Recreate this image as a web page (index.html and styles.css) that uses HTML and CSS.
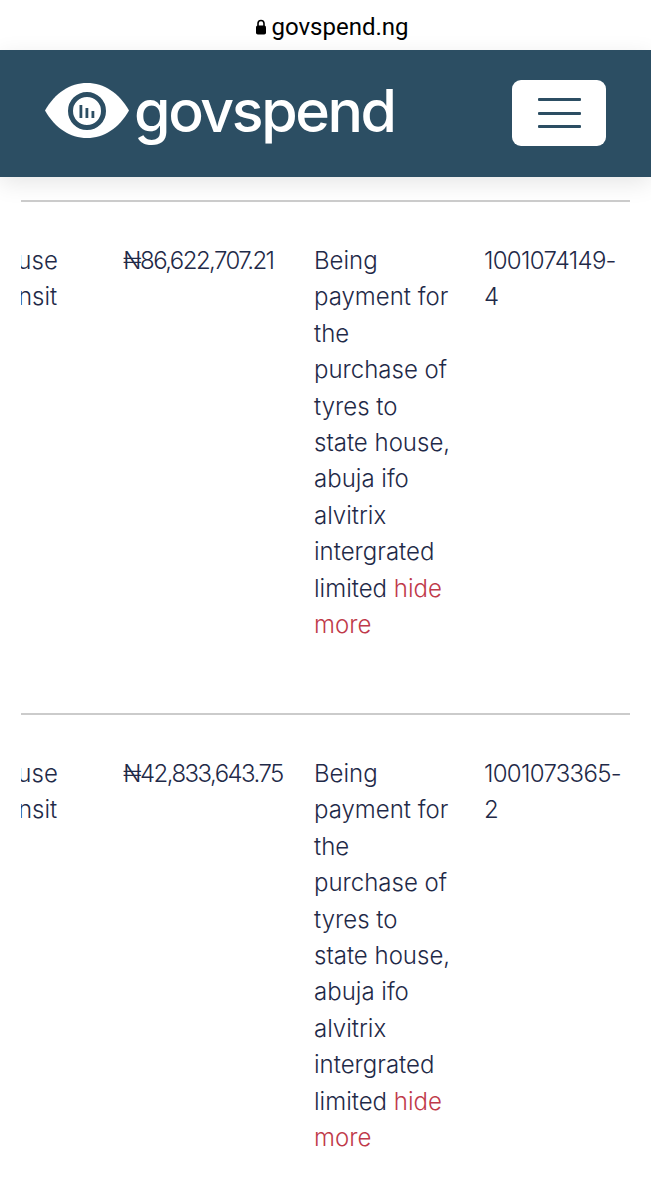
FILE: index.html
```html
<!DOCTYPE html>
<html>
    <head>
        <title>govspend.ng</title>
        <link rel="stylesheet" href="styles.css">
    </head>
    <body>
        <div class='addressBar'>
            <svg class='lock' width='12' height='16' viewBox='0 0 12 16'>
                <path d='M3 7V4.5a3 3 0 0 1 6 0V7' fill='none' stroke='#000' stroke-width='1.6'/>
                <rect x='1' y='6.5' width='10' height='9' rx='1.8' fill='#000'/>
            </svg>
            <span>govspend.ng</span>
        </div>
        <div class='topBar'>
            <div class='logo'>
                <svg class='eye' width='84' height='55' viewBox='0 0 84 55'>
                    <path d='M0 27.5C10 10 25 0 42 0s32 10 42 27.5C74 45 59 55 42 55S10 45 0 27.5z' fill='#fff'/>
                    <circle cx='42' cy='28' r='16.500' fill='none' stroke='#2c4e63' stroke-width='5'/>
                    <rect x='34.500' y='22' width='2.800' height='13' fill='#2c4e63'/>
                    <rect x='40.500' y='25' width='2.800' height='10' fill='#2c4e63'/>
                    <rect x='46.500' y='28' width='2.800' height='7' fill='#2c4e63'/>
                </svg>
                <span class='logoText'>govspend</span>
            </div>
            <div class='menuBtn'>
                <span></span>
                <span></span>
                <span></span>
            </div>
        </div>
        <div class='tableWrap'>
            <div class='row'>
                <div class='cell place'><div class='placeText'>house<br>transit</div></div>
                <div class='cell amount'>₦86,622,707.21</div>
                <div class='cell desc'>Being payment for the purchase of tyres to state house, abuja ifo alvitrix intergrated limited <a class='more'>hide more</a></div>
                <div class='cell ref'>1001074149-4</div>
            </div>
            <div class='row'>
                <div class='cell place'><div class='placeText'>house<br>transit</div></div>
                <div class='cell amount'>₦42,833,643.75</div>
                <div class='cell desc'>Being payment for the purchase of tyres to state house, abuja ifo alvitrix intergrated limited <a class='more'>hide more</a></div>
                <div class='cell ref'>1001073365-2</div>
            </div>
        </div>
    </body>
</html>
```

FILE: styles.css
```css
body
{
    margin: 0px;
    background-color: #fff;
    color: #1f2a48;
    font-family: "Inter", "Noto Sans", sans-serif;
}

.addressBar
{
    display: flex;
    justify-content: center;
    align-items: center;
    gap: 4px;
    height: 50px;
    padding-top: 4px;
    padding-left: 13px;
    box-sizing: border-box;
    color: #000;
    font-family: "Roboto", sans-serif;
    font-size: 24px;
}

.topBar
{
    display: flex;
    justify-content: space-between;
    align-items: center;
    height: 127px;
    padding: 0px 45px;
    box-sizing: border-box;
    background-color: #2c4e63;
    box-shadow: 0px 6px 22px rgba(0, 0, 0, .1);
}

.logo
{
    display: flex;
    align-items: center;
    gap: 5px;
    margin-top: -6px;
}

.logoText
{
    color: #fff;
    font-family: "Inter", sans-serif;
    font-size: 59px;
    font-weight: 500;
    line-height: 62px;
    letter-spacing: -2.400px;
}

.menuBtn
{
    display: flex;
    flex-direction: column;
    justify-content: center;
    align-items: center;
    gap: 10.500px;
    width: 94px;
    height: 66px;
    margin-top: -1px;
    border-radius: 9px;
    background-color: #fff;
}

.menuBtn span
{
    display: block;
    width: 43px;
    height: 3px;
    border-radius: 1px;
    background-color: #2c4e63;
}

.tableWrap
{
    margin: 23px 21px 0px 21px;
}

.row
{
    display: flex;
    height: 513px;
    padding-top: 41px;
    box-sizing: border-box;
    border-top: 2.500px solid #cbcbcb;
    font-size: 24px;
    font-weight: 300;
    line-height: 36.400px;
}

.place
{
    width: 102px;
    overflow: hidden;
}

.placeText
{
    margin-left: -32px;
}

.amount
{
    width: 191px;
    letter-spacing: -1.550px;
}

.desc
{
    width: 170px;
    padding-right: 27px;
    box-sizing: border-box;
}

.ref
{
    width: 145px;
    letter-spacing: -.700px;
}

.more
{
    color: #bf3a4a;
}
```
